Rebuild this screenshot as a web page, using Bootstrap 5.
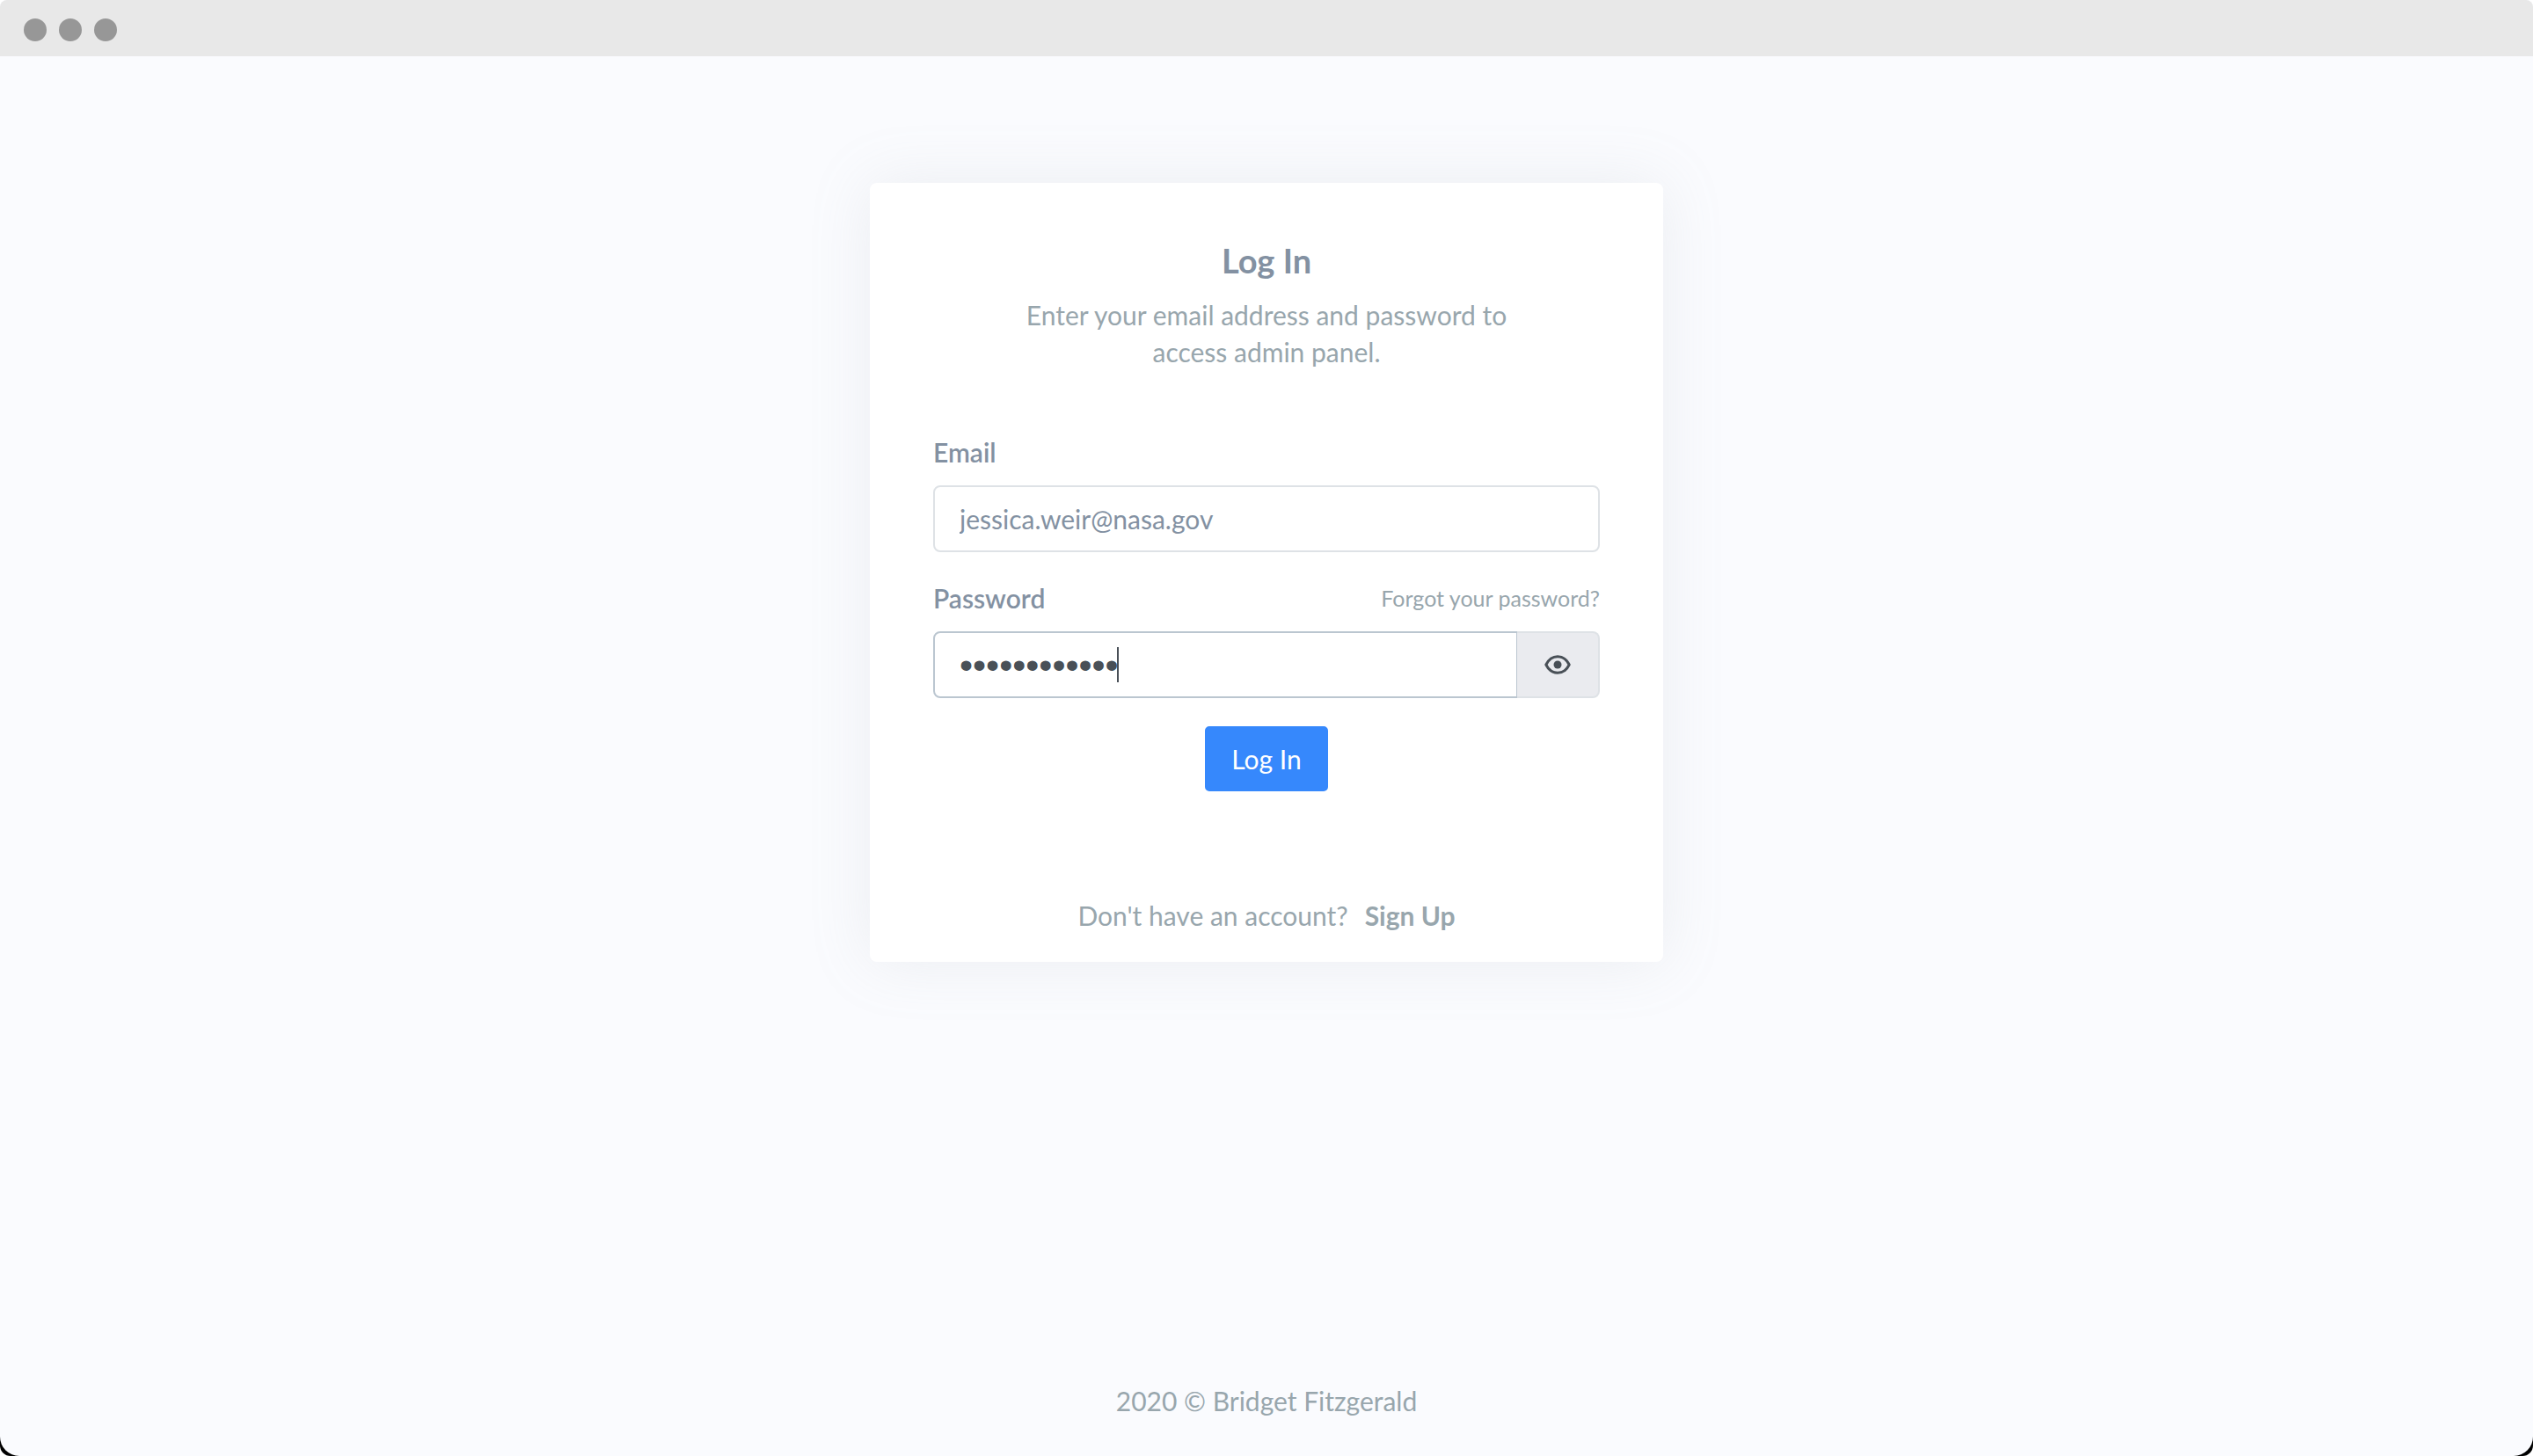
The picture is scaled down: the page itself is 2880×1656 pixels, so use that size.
<!DOCTYPE html>
<html lang="en">
<head>
<meta charset="utf-8">
<meta name="viewport" content="width=device-width, initial-scale=1">
<title>Log In</title>
<link rel="stylesheet" href="https://cdn.jsdelivr.net/npm/bootstrap@5.3.0/dist/css/bootstrap.min.css">
<style>
:root { --ink: #8391a2; --soft: #98a6ad; --dark: #495057; --line: #dee2e6; }
html { background: #fff; }
body { background: linear-gradient(transparent 50%, #000 50%); border-radius: 0 0 12px 12px; font-family: Lato, "Noto Sans", sans-serif; font-size: 30px; line-height: 42px; color: var(--soft); }
.app-window { background: #fafbfe; border-radius: 8px 8px 22px 22px; overflow: hidden; }
.title-bar { height: 64px; padding: 4px 27px 0; gap: 14px; background: #e8e8e8; }
.window-dot { width: 26px; height: 26px; background: #979797; }
.login-card { width: 100%; max-width: 902px; margin-top: 144px; padding: 62px 72px 32px; border: 0; border-radius: 8px; box-shadow: 0 0 70px rgba(154, 161, 171, .15); }
.login-title { font-size: 38px; line-height: 52px; font-weight: 700; color: var(--ink); margin-bottom: 15px; }
.login-intro { max-width: 568px; margin-bottom: 72px; }
.form-label { color: var(--ink); font-weight: 600; margin-bottom: 17px; }
.email-group { margin-bottom: 31px; }
.login-field { height: 76px; padding: 0 28px; font-size: 30px; color: var(--ink); border: 2px solid var(--line); border-radius: 8px; }
.login-field:focus { color: var(--ink); }
.password-field { border-color: #bbc6d0; color: var(--dark); font-family: "Liberation Sans", sans-serif; font-size: 43px; }
.field-caret { position: absolute; z-index: 6; left: 210px; top: 18px; width: 2px; height: 40px; background: var(--dark); }
.reveal-btn { width: 94px; background: #eaebef; border: 2px solid var(--line); border-radius: 8px; padding: 0; color: var(--dark); }
.input-group > .reveal-btn { border-left: 0; }
.forgot-link { font-size: 25px; color: var(--soft); }
.login-btn { --bs-btn-bg: #3688fc; --bs-btn-border-color: #3688fc; --bs-btn-font-size: 30px; --bs-btn-line-height: 42px; --bs-btn-border-radius: 5px; --bs-btn-padding-x: 28px; --bs-btn-padding-y: 14px; --bs-btn-border-width: 2px; margin-top: 32px; }
.signup-line { margin-top: 120px; gap: 19px; }
.signup-line a { color: var(--soft); }
.page-footer { padding: 42px; }
</style>
<script src="https://cdn.jsdelivr.net/npm/bootstrap@5.3.0/dist/js/bootstrap.bundle.min.js"></script>
</head>
<body>
<div class="app-window d-flex flex-column min-vh-100">
  <header class="title-bar d-flex align-items-center">
    <span class="window-dot rounded-circle"></span>
    <span class="window-dot rounded-circle"></span>
    <span class="window-dot rounded-circle"></span>
  </header>
  <main class="d-flex justify-content-center">
    <div class="card login-card">
      <h1 class="login-title text-center">Log In</h1>
      <p class="login-intro text-center mx-auto">Enter your email address and password to access admin panel.</p>
      <form>
        <div class="email-group">
          <label class="form-label d-block" for="email">Email</label>
          <input class="form-control login-field" type="email" id="email" value="jessica.weir@nasa.gov">
        </div>
        <div class="d-flex justify-content-between">
          <label class="form-label" for="password">Password</label>
          <a class="forgot-link text-decoration-none" href="#">Forgot your password?</a>
        </div>
        <div class="input-group">
          <input class="form-control login-field password-field" type="password" id="password" value="abcdefghijkl">
          <span class="field-caret" aria-hidden="true"></span>
          <button class="btn reveal-btn d-flex align-items-center justify-content-center" type="button" aria-label="Show password">
            <svg width="30" height="22" viewBox="0 0 30 22" fill="none" aria-hidden="true"><path d="M1.800 11C8 -1.400 22 -1.400 28.200 11C22 23.400 8 23.400 1.800 11Z" stroke="currentColor" stroke-width="3" stroke-linejoin="round"/><circle cx="15" cy="11" r="4.500" fill="currentColor"/></svg>
          </button>
        </div>
        <div class="text-center"><button class="btn btn-primary login-btn" type="submit">Log In</button></div>
      </form>
      <div class="signup-line d-flex justify-content-center"><span>Don't have an account?</span><a class="fw-bold text-decoration-none" href="#">Sign Up</a></div>
    </div>
  </main>
  <footer class="page-footer text-center mt-auto">2020 © Bridget Fitzgerald</footer>
</div>
</body>
</html>
